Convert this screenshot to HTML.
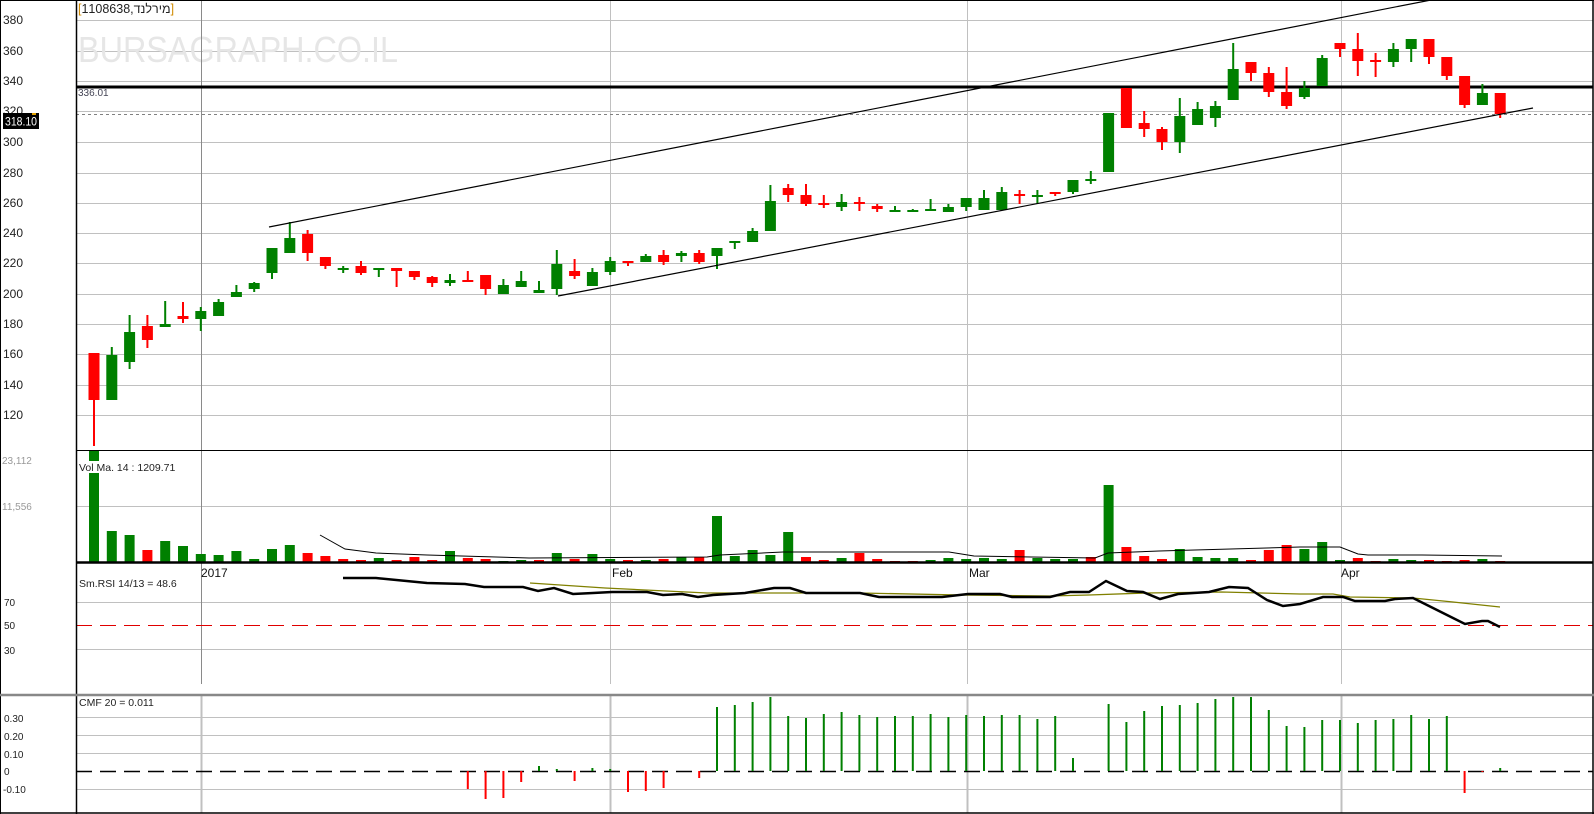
<!DOCTYPE html>
<html><head><meta charset="utf-8"><style>
html,body{margin:0;padding:0;background:#fff;}
svg{display:block;font-family:"Liberation Sans","Noto Sans CJK JP",sans-serif;}
</style></head><body>
<svg id="s" width="1594" height="814" viewBox="0 0 1594 814" xmlns="http://www.w3.org/2000/svg">
<rect width="1594" height="814" fill="#fff"/>
<g id="grid" stroke="#c0c0c0" stroke-width="1"></g>
<text x="78" y="62" font-size="36" fill="#e6e6e6" textLength="320" lengthAdjust="spacingAndGlyphs">BURSAGRAPH.CO.IL</text>
<line x1="201.5" y1="0" x2="201.5" y2="684" stroke="#8a8a8a"/>
<line x1="610.5" y1="0" x2="610.5" y2="684" stroke="#c0c0c0"/>
<line x1="967.5" y1="0" x2="967.5" y2="684" stroke="#c0c0c0"/>
<line x1="1341.5" y1="0" x2="1341.5" y2="684" stroke="#c0c0c0"/>
<line x1="201.5" y1="696" x2="201.5" y2="813" stroke="#c0c0c0" stroke-width="2"/>
<line x1="610.5" y1="696" x2="610.5" y2="813" stroke="#c0c0c0" stroke-width="2"/>
<line x1="967.5" y1="696" x2="967.5" y2="813" stroke="#c0c0c0" stroke-width="2"/>
<line x1="1341.5" y1="696" x2="1341.5" y2="813" stroke="#c0c0c0" stroke-width="2"/>
<line x1="76" y1="87" x2="1593" y2="87" stroke="#000" stroke-width="3"/>
<line x1="76" y1="114.5" x2="1593" y2="114.5" stroke="#808080" stroke-dasharray="3,3"/>
<line x1="76" y1="625.5" x2="1593" y2="625.5" stroke="#e00000" stroke-dasharray="16,8"/>
<line x1="76" y1="771.5" x2="1593" y2="771.5" stroke="#000" stroke-width="1.5" stroke-dasharray="16,8"/>
<g id="data"></g>
<line x1="269" y1="227" x2="1431" y2="0" stroke="#000" stroke-width="1.2"/>
<line x1="558" y1="296" x2="1533" y2="108" stroke="#000" stroke-width="1.2"/>
<polyline fill="none" stroke="#000" stroke-width="1" points="320,535 345,549 376,553 427,555 529,558 707,557 720,555 783,552 949,552 974,556 1095,558 1108,553 1159,551 1300,547 1340,547 1358,554 1368,555 1422,555 1502,556"/>
<polyline fill="none" stroke="#808000" stroke-width="1.3" points="530,583 605,588 707,593 745,593 860,593 961,595 1050,596 1089,595 1146,593 1222,592 1300,594 1333,594 1350,597 1413,598 1453,602 1500,607"/>
<polyline fill="none" stroke="#000" stroke-width="2.5" points="343,578 376,578 427,583 465,584 484,587 523,587 538,591 554,588 573,594 593,593 612,592 647,592 663,595 682,594 698,597 713,595 745,593 774,588 790,588 806,593 860,593 879,597 942,597 968,594 1000,594 1012,597 1050,597 1070,592 1089,592 1106,581 1127,591 1143,592 1160,599 1178,594 1209,592 1229,587 1248,588 1267,600 1283,606 1300,604 1323,597 1343,597 1355,601 1385,601 1395,599 1413,598 1433,608 1453,618 1465,624 1482,621 1488,621 1500,627"/>
<line x1="76.5" y1="0" x2="76.5" y2="814" stroke="#000" stroke-width="1.5"/>
<line x1="0.5" y1="0" x2="0.5" y2="814" stroke="#000"/>
<line x1="1593" y1="0" x2="1593" y2="814" stroke="#000" stroke-width="1.5"/>
<line x1="0" y1="0.5" x2="1594" y2="0.5" stroke="#000"/>
<line x1="0" y1="813" x2="1594" y2="813" stroke="#000" stroke-width="1.5"/>
<line x1="76" y1="450.5" x2="1593" y2="450.5" stroke="#000"/>
<line x1="76" y1="562.5" x2="1593" y2="562.5" stroke="#000" stroke-width="2.5"/>
<line x1="0" y1="695" x2="1594" y2="695" stroke="#888" stroke-width="2.5"/>
<g font-size="12" fill="#222">
<text x="3" y="24">380</text><text x="3" y="55">360</text><text x="3" y="85">340</text><text x="3" y="115">320</text>
<text x="3" y="146">300</text><text x="3" y="177">280</text><text x="3" y="207">260</text><text x="3" y="237">240</text>
<text x="3" y="267">220</text><text x="3" y="298">200</text><text x="3" y="328">180</text><text x="3" y="358">160</text>
<text x="3" y="389">140</text><text x="3" y="419">120</text>
</g>
<rect x="3" y="113" width="36" height="16" fill="#000"/>
<rect x="32" y="113" width="4" height="2" fill="#e0a000"/>
<text x="5" y="125.5" font-size="12" fill="#fff" textLength="32" lengthAdjust="spacingAndGlyphs">318.10</text>
<text x="78" y="13" font-size="12.5" fill="#222" direction="ltr" unicode-bidi="embed"><tspan fill="#d08a00">[</tspan>1108638,<tspan unicode-bidi="embed">מירלנד</tspan><tspan fill="#d08a00">]</tspan></text>
<text x="78" y="96" font-size="10" fill="#445">336.01</text>
<g font-size="10" fill="#999"><text x="2" y="464">23,112</text><text x="2" y="510">11,556</text></g>
<rect x="78" y="461" width="87" height="12" fill="#fff"/>
<text x="79" y="471" font-size="10.5" fill="#222">Vol Ma. 14 : 1209.71</text>
<g font-size="12" fill="#111"><text x="201" y="577">2017</text><text x="612" y="577">Feb</text><text x="969" y="577">Mar</text><text x="1341" y="577">Apr</text></g>
<text x="79" y="587" font-size="10.5" fill="#222">Sm.RSI 14/13 = 48.6</text>
<g font-size="10" fill="#222"><text x="4" y="606">70</text><text x="4" y="629">50</text><text x="4" y="654">30</text>
<text x="4" y="722">0.30</text><text x="4" y="740">0.20</text><text x="4" y="758">0.10</text><text x="4" y="775">0</text><text x="3" y="793">-0.10</text></g>
<text x="79" y="706" font-size="10.5" fill="#222">CMF 20 = 0.011</text>
</svg>
<script>
(function(){
var NS="http://www.w3.org/2000/svg";
function el(p,t,a){var e=document.createElementNS(NS,t);for(var k in a)e.setAttribute(k,a[k]);p.appendChild(e);return e;}
var g=document.getElementById('grid');
[20,51,81,111,142,173,203,233,263,294,324,354,385,415,506,602,649,717,735,753,789].forEach(function(y){el(g,'line',{x1:76,y1:y+.5,x2:1593,y2:y+.5});});
var d=document.getElementById('data');
var G="#008000",R="#ff0000";
var C=[
"R 353 400 353 446","G 355 400 347 400","G 332 362 315 369","R 326 340 315 348","G 324 327 301 327","R 316 319 302 323","G 311 319 307 331","G 302 316 299 316","G 292 297 285 297","G 283 289 282 292",
"G 248 273 248 279","G 238 253 222 253","R 234 253 230 261","R 257 266 257 269","G 268 270 266 273","R 266 273 261 275","G 268 270 268 277","R 268 271 268 287","R 271 277 271 280","R 277 283 276 287",
"G 280 283 274 286","R 280 281 271 281","R 275 289 275 295","G 285 294 279 294","G 281 287 271 287","G 290 293 281 293","G 264 289 250 295","R 271 276 259 279","G 272 286 268 286","G 261 272 257 275",
"R 261 262 261 266","G 256 262 254 262","R 255 262 250 265","G 253 256 251 262","R 253 262 250 264","G 248 256 248 269","G 241 242 241 249","G 231 242 228 242","G 201 231 185 231","R 188 195 184 202",
"R 195 204 184 206","R 203 205 195 208","G 202 207 194 211","R 202 203 197 211","R 206 209 204 212","G 210 211 206 211","G 210 211 209 211","G 209 210 199 210","G 207 212 204 212","G 198 207 198 211",
"G 198 210 190 210","G 192 210 187 210","R 194 196 190 204","G 195 197 190 204","R 192 194 192 196","G 180 192 180 194","G 179 181 171 184","G 113 172 113 172","R 88 128 88 128","R 123 129 111 137",
"R 129 142 127 150","G 116 142 98 153","G 109 125 102 125","G 106 118 101 127","G 69 100 43 100","R 62 73 62 81","R 73 92 67 97","R 92 106 67 109","G 88 97 81 99","G 58 86 55 86",
"R 43 49 43 57","R 49 61 33 76","R 60 62 53 77","G 49 62 43 67","G 39 49 39 62","R 39 57 39 64","R 57 76 57 80","R 76 105 76 108","G 93 105 84 105","R 93 114 93 118"];
var V=[450,531,535,550,541,546,554,555,551,559,549,545,553,556,559,560,558,560,557,560,551,558,559,561,560,560,553,559,554,559,560,560,559,557,557,516,556,550,555,532,557,560,558,553,559,561,561,560,558,559,558,559,550,558,559,559,557,485,547,556,559,549,557,558,558,560,550,545,549,542,560,558,561,559,560,560,561,560,559,561];
var VC="GGGRGGGGGGGGRRRRGRRRGRRGGRGRGGRGRGRGGGGGRRGRRRRGGGGGRGGGRGRRRGGGGRRRGGGRRGGRRRGR";
var CM={22:789,23:799,24:798,25:782,26:766,27:769,28:781,29:768,30:769,31:792,32:791,33:788,35:778,
36:707,37:705,38:702,39:697,40:716,41:718,42:714,43:712,44:715,45:717,46:716,47:716,48:714,49:717,50:715,51:716,52:715,53:715,54:719,55:716,56:758,
58:704,59:722,60:711,61:706,62:705,63:703,64:699,65:697,66:697,67:710,68:726,69:727,70:720,71:720,72:723,73:720,74:719,75:715,76:719,77:716,78:793,79:772,80:768};
for(var i=0;i<80;i++){
 var x=94+i*17.8, a=C[i].split(' '), c=a[0]=='G'?G:R;
 var bt=+a[1],bb=+a[2],hi=+a[3],lo=+a[4];
 el(d,'rect',{x:(x-1).toFixed(1),y:hi,width:2,height:Math.max(1,lo-hi),fill:c});
 el(d,'rect',{x:(x-5.5).toFixed(1),y:bt,width:11,height:Math.max(2,bb-bt),fill:c});
 var vt=V[i];
 el(d,'rect',{x:(x-5).toFixed(1),y:vt,width:10,height:562-vt,fill:VC[i]=='G'?G:R});
 var cm=CM[i+1];
 if(cm!==undefined){
  if(cm<771) el(d,'rect',{x:(x-1).toFixed(1),y:cm,width:2,height:771-cm,fill:G});
  else el(d,'rect',{x:(x-1).toFixed(1),y:771,width:2,height:cm-771,fill:R});
 }
}
})();
</script>
</body></html>
